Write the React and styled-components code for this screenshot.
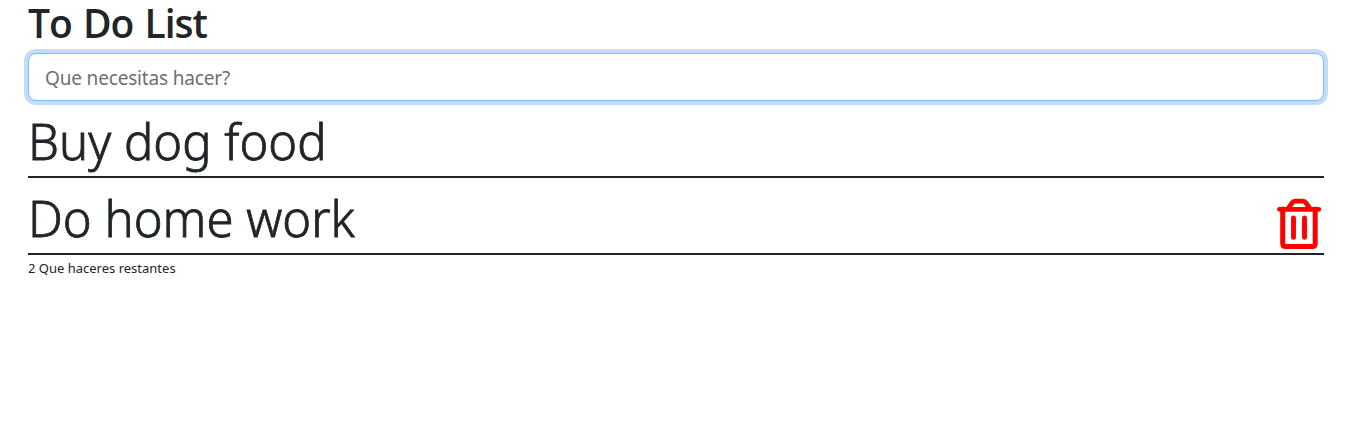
import React from 'react';
import styled, { createGlobalStyle } from 'styled-components';

const GlobalStyle = createGlobalStyle`
  *, *::before, *::after { box-sizing: border-box; }
  body {
    margin: 0;
    background: #fff;
    color: #212529;
    font-family: "Noto Sans", "Open Sans", sans-serif;
    line-height: 1.5;
  }
`;

const Page = styled.main`
  padding: 0 46px 0 28px;
`;

const Title = styled.h1`
  margin: 0 0 5px;
  height: 48px;
  font-family: "Open Sans", "Noto Sans", sans-serif;
  font-size: 39px;
  line-height: 46px;
  font-weight: 600;
  white-space: nowrap;
  letter-spacing: -1px;
  word-spacing: 2px;
`;

const TaskInput = styled.input`
  display: block;
  width: 100%;
  height: 48px;
  padding: 9px 16px 7px;
  border: 1px solid #86b7fe;
  border-radius: 8px;
  outline: 0;
  box-shadow: 0 0 0 4px rgba(13, 110, 253, 0.25);
  background: #fff;
  color: #212529;
  font: 400 19px/30px "Noto Sans", "Open Sans", sans-serif;
  letter-spacing: -0.17px;
  &::placeholder { color: #6c7074; opacity: 1; }
`;

const TaskList = styled.ul`
  margin: 0;
  padding: 0;
  list-style: none;
`;

const Task = styled.li`
  display: flex;
  justify-content: space-between;
  align-items: flex-end;
  height: 77px;
  border-bottom: 2px solid #212529;
`;

const TaskName = styled.span`
  font-size: 49px;
  line-height: 70px;
  font-weight: 300;
  -webkit-text-stroke: 0.8px currentColor;
  white-space: nowrap;
`;

const DeleteButton = styled.button`
  display: block;
  padding: 0;
  margin: 0 2px 3px 0;
  border: 0;
  background: none;
  color: red;
  svg { display: block; }
`;

const Remaining = styled.p`
  margin: 3px 0 0;
  font-size: 13px;
  line-height: 20px;
`;

const tasks = [
  { name: 'Buy dog food', active: false },
  { name: 'Do home work', active: true },
];

function TrashIcon() {
  return (
    <svg width="45" height="52" viewBox="0 0 45 52" fill="none" stroke="currentColor" strokeWidth="5" strokeLinecap="round" strokeLinejoin="round">
      <path d="M2.4 11.3H41.8" strokeWidth="4.8" />
      <path d="M5.7 11V45.5Q5.7 48.5 8.7 48.5H35.2Q38.2 48.5 38.2 45.5V11" />
      <path d="M11.5 10L15 5Q16.2 3.2 18.2 3.2H25.8Q27.8 3.2 29 5L32.5 10" strokeWidth="4.8" />
      <path d="M16.5 20V39.4M27.5 20V39.4" strokeWidth="4.9" />
    </svg>
  );
}

export default function App() {
  return (
    <>
      <GlobalStyle />
      <Page>
        <Title>To Do List</Title>
        <TaskInput placeholder="Que necesitas hacer?" />
        <TaskList>
          {tasks.map((task) => (
            <Task key={task.name}>
              <TaskName>{task.name}</TaskName>
              {task.active && (
                <DeleteButton aria-label="Delete"><TrashIcon /></DeleteButton>
              )}
            </Task>
          ))}
        </TaskList>
        <Remaining>{tasks.length} Que haceres restantes</Remaining>
      </Page>
    </>
  );
}
